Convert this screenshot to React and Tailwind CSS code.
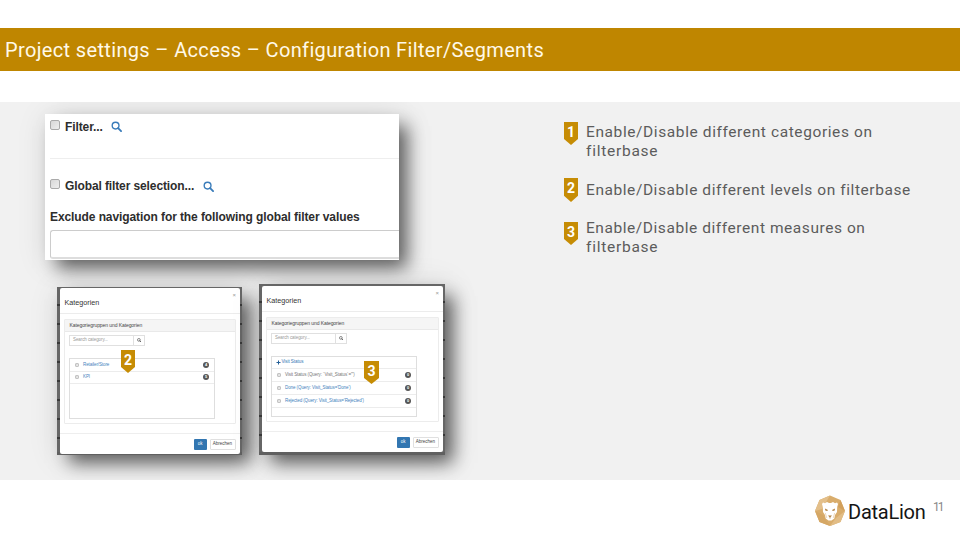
import React from "react";

const TECH = "font-[Roboto,'Noto_Sans',sans-serif]";

function Magnifier({ className }) {
  return (
    <svg viewBox="0 0 12 12" className={className} fill="none" stroke="currentColor">
      <circle cx="5" cy="5" r="3.7" strokeWidth="1.5" />
      <path d="M7.8 7.8 L11 11" strokeWidth="2" strokeLinecap="round" />
    </svg>
  );
}

// A five-sided pin with a bold number on it.
function Pin({ n, className = "" }) {
  return (
    <div className={`relative shrink-0 text-white ${className}`}>
      <svg viewBox="0 0 14 23" preserveAspectRatio="none" className="absolute inset-0 h-full w-full">
        <path d="M0 0H14V17L7 23L0 17Z" fill="#c68c04" />
      </svg>
      <span className={`relative block text-center font-bold ${TECH} text-[14px] leading-[20px]`}>{n}</span>
    </div>
  );
}

function Check({ className = "" }) {
  return <span className={`block shrink-0 border bg-gradient-to-br from-[#d8d8d8] to-[#eee] ${className}`} />;
}

function FilterCard() {
  return (
    <section className="flex h-[146px] w-[354px] flex-col overflow-hidden bg-white pl-[5px] font-['Liberation_Sans',Arial,sans-serif] text-[12px] font-bold text-[#2d2d2d]">
      <div className="flex h-[45px] items-start border-b border-[#eee] pt-[6px]">
        <Check className="h-[10px] w-[10px] rounded-[2px] border-[#aaa]" />
        <span className="ml-[5px] w-[38px] whitespace-nowrap leading-[15px] tracking-[-0.1px]">Filter...</span>
        <Magnifier className="ml-[8px] mt-px h-[11px] w-[11px] text-[#3a7cba]" />
      </div>
      <div className="flex h-[51px] items-start pt-[20px]">
        <Check className="h-[10px] w-[10px] rounded-[2px] border-[#aaa]" />
        <span className="ml-[5px] w-[130px] whitespace-nowrap leading-[15px] tracking-[-0.11px]">Global filter selection...</span>
        <Magnifier className="ml-[8px] mt-[2px] h-[11px] w-[11px] text-[#3a7cba]" />
      </div>
      <div className="h-[20px] whitespace-nowrap leading-[15px] tracking-[-0.09px]">Exclude navigation for the following global filter values</div>
      <div className="h-[29px] shrink-0 rounded-l-[3px] border border-r-0 border-b-2 border-[#ccc] border-b-[#ddd] bg-white" />
    </section>
  );
}

function CountDot({ n }) {
  return (
    <span className="ml-auto mr-[5px] flex h-[6px] w-[6px] items-center justify-center rounded-full bg-[#555] text-[4px] font-bold leading-none text-white">{n}</span>
  );
}

function Row({ label, muted, n = "0", tall }) {
  return (
    <div className={`flex shrink-0 items-center border-b border-[#ececec] pl-[5px] tracking-[-0.09px] ${tall ? "h-[13px]" : "h-[12.5px]"}`}>
      <Check className="h-[4px] w-[4px] rounded-[1px] border-[#c4c4c4]" />
      <span className={`ml-[4px] whitespace-nowrap ${muted ? "text-[#777]" : "text-[#4583bd]"}`}>{label}</span>
      <CountDot n={n} />
    </div>
  );
}

function Dialog({ children }) {
  return (
    <div className="flex h-[166px] w-full flex-col rounded-[2px] bg-white font-['Liberation_Sans',Arial,sans-serif] text-[4.5px] leading-none text-[#555]">
      <header className="flex h-[26px] shrink-0 items-start justify-between border-b border-[#ececec] pl-[4.5px] pr-[4px]">
        <h2 className="pt-[11px] text-[7.2px] leading-[8px] text-[#333]">Kategorien</h2>
        <span className="pt-[4px] text-[6px] leading-[6px] text-[#999]">×</span>
      </header>
      <div className="mx-[4px] mt-[5px] flex h-[105px] shrink-0 flex-col rounded-[1px] border border-[#ececec]">
        <div className="flex h-[12px] shrink-0 items-center border-b border-[#e9e9e9] bg-[#f5f5f5] pl-[4.5px] text-[5px] tracking-[-0.08px] text-[#444]">
          Kategoriegruppen und Kategorien
        </div>
        <div className="ml-[4px] mt-[3px] flex h-[11px] w-[76px] shrink-0 border border-[#e0e0e0]">
          <span className="flex w-[64px] items-center border-r border-[#e0e0e0] pl-[3px] tracking-[-0.08px] text-[#999]">Search category...</span>
          <span className="flex flex-1 items-center justify-center">
            <Magnifier className="h-[4.5px] w-[4.5px] text-[#333]" />
          </span>
        </div>
        <div className="ml-[4px] mt-[12px] flex h-[61px] w-[146px] shrink-0 flex-col border border-[#dedede]">{children}</div>
      </div>
      <footer className="mt-[9px] flex flex-1 items-start justify-end gap-[3px] border-t border-[#eee] pr-[4.5px] pt-[5px]">
        <span className="flex h-[11px] w-[12.5px] items-center justify-center rounded-[1px] bg-[#3276b1] text-white">ok</span>
        <span className="flex h-[11px] w-[26px] items-center justify-center rounded-[1px] border border-[#e0e0e0] text-[#444]">Abrechen</span>
      </footer>
    </div>
  );
}

function Backdrop({ className, children }) {
  return (
    <div className={`relative shrink-0 bg-[linear-gradient(#606060,#606060),repeating-linear-gradient(180deg,#666_0px,#666_17px,#383838_17px,#383838_19px)] bg-[size:100%_3px,100%_100%] bg-bottom bg-no-repeat ${className}`}>
      {children}
    </div>
  );
}

const SHADOW = "shadow-[10px_10px_17px_-2px_rgba(0,0,0,0.58),3px_3px_30px_rgba(0,0,0,0.13)]";

function Item({ n, lines, pin, className }) {
  return (
    <li className={`flex items-start ${className}`}>
      <Pin n={n} className={pin} />
      <div className={`ml-[8px] whitespace-nowrap pt-px ${TECH} text-[15.5px] leading-[19px] text-[#5c5c5c]`}>
        {lines.map(([text, track]) => (
          <div key={text} className={track}>{text}</div>
        ))}
      </div>
    </li>
  );
}

function Lion() {
  return (
    <svg viewBox="0 0 32 32" className="h-[32px] w-[32px]">
      <path d="M16 0.5L26.5 5L31 16L26.5 27L16 31L5.5 27L1 16L5.5 5Z" fill="#d9ad6c" />
      <path d="M16 0.5L5.5 5L1 16L8 14Z" fill="#e3bf8a" />
      <path d="M31 16L26.5 27L16 31L22 23Z" fill="#e2bd86" />
      <path d="M26.5 5L31 16L24 12Z" fill="#d2a05c" />
      <path d="M1 16L5.5 27L16 31L9 20Z" fill="#d5a765" />
      <path d="M8 9L9 7.5L11 8.3L13 7L15 8L17 8L19 7L21 8.3L23 7.5L24 9L23.2 12L23 17L21 20L20.3 23.5L17.5 25.5H14.5L11.7 23.5L11 20L9 17L8.8 12Z" fill="#fff" />
      <path d="M11 13.5L14 15L13.2 16L11.3 15.5ZM21 13.5L18 15L18.8 16L20.7 15.5ZM14 20.5H18L16.4 22.2V23.5H15.6V22.2Z" fill="#af8042" />
      <path d="M11.3 18L12.8 23M20.7 18L19.2 23" stroke="#e5c99f" strokeWidth=".7" />
    </svg>
  );
}

export default function App() {
  return (
    <div className="flex h-[540px] w-[960px] flex-col overflow-hidden bg-white pt-[28px]">
      <header className={`flex h-[43px] shrink-0 items-center bg-[#bf8600] pl-[5px] ${TECH}`}>
        <h1 className="whitespace-nowrap text-[20px] leading-[24px] tracking-[0.35px] text-[#fff9e8]">
          Project settings – Access – Configuration Filter/Segments
        </h1>
      </header>

      <main className="mt-[31px] flex h-[378px] shrink-0 items-start overflow-hidden bg-[#f1f1f1]">
        <div className="flex w-[564px] shrink-0 flex-col pl-[45px] pt-[12px]">
          <div className={`h-[146px] w-[354px] ${SHADOW}`}>
            <FilterCard />
          </div>
          <div className="ml-[12px] mt-[24px] flex items-start gap-[17px]">
            <Backdrop className={`mt-[3px] h-[168px] w-[185px] pl-[3px] pr-[2px] pt-px ${SHADOW}`}>
              <Dialog>
                <Row label="Retailer/Store" n="4" />
                <Row label="KPI" n="5" />
              </Dialog>
              <Pin n="2" className="absolute! left-[64px] top-[63px] h-[23px] w-[14px]" />
            </Backdrop>
            <Backdrop className={`h-[171px] w-[186px] pl-[3px] pr-[2px] pt-[2px] ${SHADOW}`}>
              <Dialog>
                <div className="flex h-[12px] shrink-0 items-center border-b border-[#ececec] pl-[4px] tracking-[-0.05px] text-[#3476b5]">
                  <svg viewBox="0 0 5 5" className="mr-[0.5px] h-[5px] w-[5px]"><path d="M2.5 0.5V4.5M0.5 2.5H4.5" stroke="#245f97" strokeWidth="1" /></svg>
                  Visit Status
                </div>
                <Row label={"Visit Status (Query: ´Visit_Status´=\"')"} muted tall />
                <Row label="Done (Query: Visit_Status='Done')" tall />
                <Row label="Rejected (Query: Visit_Status='Rejected')" />
              </Dialog>
              <Pin n="3" className="absolute! left-[105px] top-[77px] h-[23px] w-[15px]" />
            </Backdrop>
          </div>
        </div>

        <ul className="flex flex-col pt-[20px]">
          <Item
            n="1"
            className="h-[58px]"
            pin="h-[23px] w-[14px]"
            lines={[["Enable/Disable different categories on", "tracking-[0.6px]"], ["filterbase", "tracking-[0.75px]"]]}
          />
          <Item n="2" className="h-[38px]" pin="-mt-[2px] h-[24px] w-[14px]" lines={[["Enable/Disable different levels on filterbase", "tracking-[0.57px]"]]} />
          <Item
            n="3"
            className="h-[40px]"
            pin="mt-[4px] h-[23px] w-[14px]"
            lines={[["Enable/Disable different measures on", "tracking-[0.56px]"], ["filterbase", "tracking-[0.75px]"]]}
          />
        </ul>
      </main>

      <footer className={`flex flex-1 items-start pl-[814px] pt-[15px] ${TECH}`}>
        <Lion />
        <span className="ml-[2px] w-[78px] whitespace-nowrap pt-[5px] text-[20px] leading-[24px] tracking-[-0.25px] text-[#151515]">DataLion</span>
        <span className="ml-[7px] pt-[5px] text-[12px] leading-[14px] tracking-[-2px] text-[#888]">11</span>
      </footer>
    </div>
  );
}
